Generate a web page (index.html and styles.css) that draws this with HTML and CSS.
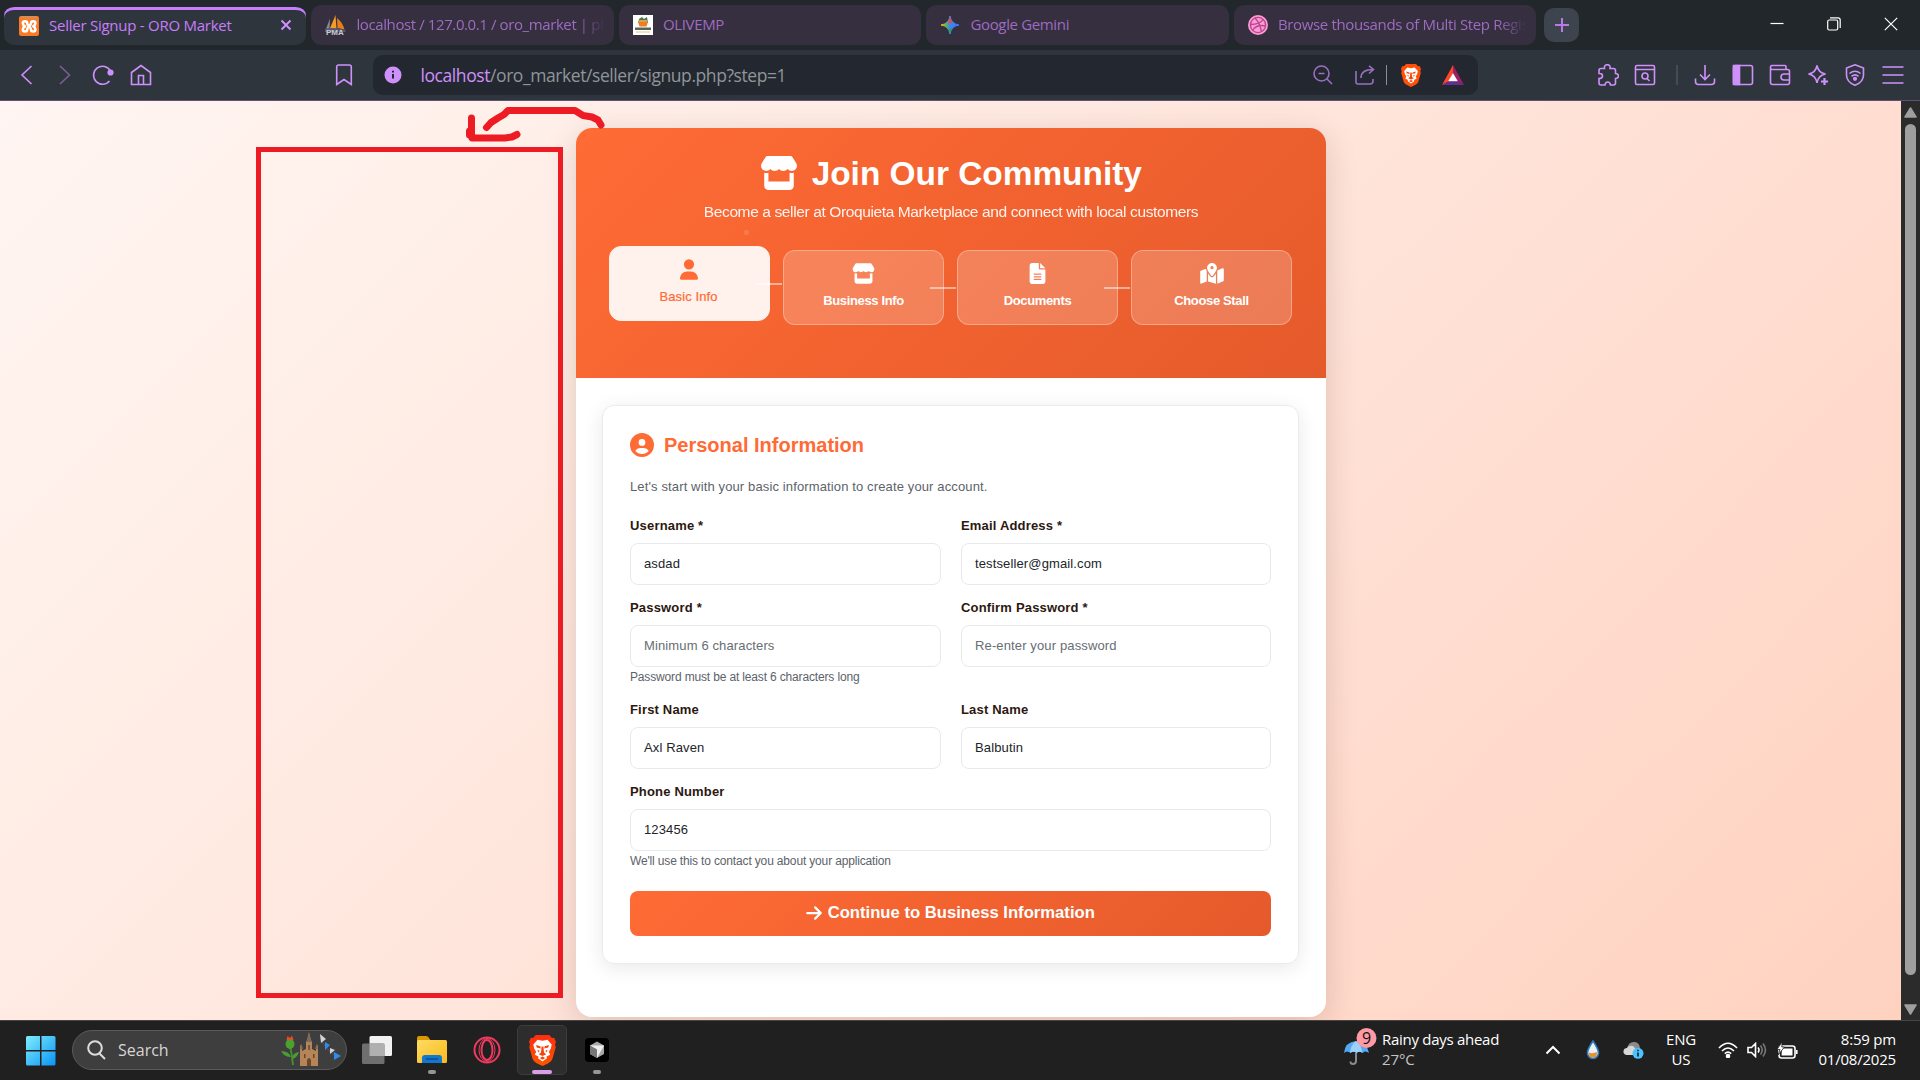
FILE: index.html
```html
<!DOCTYPE html>
<html lang="en">
<head>
<meta charset="utf-8">
<title>Seller Signup - ORO Market</title>
<link rel="stylesheet" href="styles.css">
</head>
<body>
<svg class="defs" width="0" height="0">
  <defs>
    <linearGradient id="winGrad" x1="0" y1="0" x2="1" y2="1"><stop offset="0" stop-color="#7eeefc"/><stop offset="1" stop-color="#0a93f5"/></linearGradient>
    <linearGradient id="folderGrad" x1="0" y1="0" x2="1" y2="1"><stop offset="0" stop-color="#ffdc62"/><stop offset="1" stop-color="#fbb91c"/></linearGradient>
    <linearGradient id="braveGrad" x1="0" y1="0" x2="0" y2="1"><stop offset="0" stop-color="#ff2d10"/><stop offset="1" stop-color="#ff5500"/></linearGradient>
    <linearGradient id="gemGrad" x1="0" y1="0.5" x2="1" y2="0.5"><stop offset="0" stop-color="#fbbc04"/><stop offset=".3" stop-color="#5fae6a"/><stop offset=".5" stop-color="#3b86f5"/><stop offset="1" stop-color="#2f7df6"/></linearGradient>
    <symbol id="store" viewBox="0 0 576 512"><path d="M547.6 103.8L490.3 13.1C485.2 5 476.1 0 466.4 0H109.6C99.9 0 90.8 5 85.7 13.1L28.3 103.8c-29.6 46.8-3.4 111.9 51.9 119.4c4 .5 8.1 .8 12.1 .8c26.1 0 49.3-11.4 65.2-29c15.9 17.6 39.1 29 65.2 29c26.1 0 49.3-11.4 65.2-29c15.9 17.6 39.1 29 65.2 29c26.2 0 49.3-11.4 65.2-29c16 17.6 39.1 29 65.2 29c4.1 0 8.1-.3 12.1-.8c55.5-7.4 81.8-72.5 52.1-119.4zM499.7 254.9l-.1 0c-5.3 .7-10.7 1.1-16.2 1.1c-12.4 0-24.3-1.9-35.4-5.3V384H128V250.6c-11.2 3.5-23.2 5.4-35.6 5.4c-5.5 0-11-.4-16.3-1.1l-.1 0c-4.1-.6-8.1-1.3-12-2.3V384v64c0 35.3 28.7 64 64 64H448c35.3 0 64-28.7 64-64V384 252.6c-4 1-8 1.8-12.3 2.3z"/></symbol>
    <symbol id="lion" viewBox="0 0 20 23"><path d="M5 0h10l2 2.2 1.6-.2 1.4 3-.7 2 .5 2-2.3 8.2c-.6 1.800-1.600 2.600-3.500 3.900L10 23l-4-1.900C4.100 19.800 3.100 19 2.500 17.200L.2 9l.5-2L0 5l1.400-3 1.600.2z"/><path fill="#fff" d="M6.300 3.600L10 4.200l3.700-.6L16.800 7l-.6 3-1.500 2.400 1 2.200-2.700 1.400.3 1.300L10 19.600l-3.300-2.300.3-1.300-2.700-1.400 1-2.200L3.800 10l-.6-3z"/><path fill="#f4460c" d="M5.300 7.500l3.100.9.300 1.700-3-.8zM14.700 7.500l-3.100.9-.3 1.700 3-.8zM9.300 8.500h1.400l.4 4.500 1.700 1.300L10 15.600l-2.800-1.300L8.900 13zM8 17l2-1 2 1-2 1.300zM6.200 11l1.700.6-.8 1.400zM13.800 11l-1.700.6.8 1.400z"/></symbol>
  </defs>
</svg>

<div class="screen">
  <header class="tabstrip">
    <div class="tab tab-active">
      <svg class="fav" width="20" height="20" viewBox="0 0 20 20"><rect width="20" height="20" rx="2" fill="#fb7a24"/><rect x="2" width="16" height="2.500" fill="#d98a55"/><g fill="none" stroke="#fff" stroke-width="2.600" stroke-linecap="round" stroke-linejoin="round"><path d="M3.800 7.200q0-2 2.200-2t2.200 2Q8.200 8.500 10 10.200 8.200 11.800 8.200 13.500q0 2-2.200 2t-2.200-2Q3.800 11.500 6 10.300 3.800 9.200 3.800 7.200z"/><path d="M12 7.200q0-2 2.200-2t2.200 2q0 2-2.200 3 2.200 1.200 2.200 3.300t-2.200 2-2.200-2Q12 11.800 10 10.200 12 8.500 12 7.200z"/></g></svg>
      <span class="tab-title t1">Seller Signup - ORO Market</span>
      <svg class="tab-x" width="12" height="12" viewBox="0 0 12 12"><path d="M1.500 1.500l9 9M10.500 1.500l-9 9"/></svg>
    </div>
    <div class="tab">
      <svg class="fav" width="21" height="20" viewBox="0 0 21 20"><path d="M1 14L5 3.500l-.5 10z" fill="#8d8b92"/><path d="M4.500 14.500L10.500 0l1 14z" fill="#f59a23"/><path d="M12 3q6 5 7.500 11.500L12.500 13z" fill="#e87f14"/><path d="M0 14q10-2.500 20.500 1v2H0z" fill="#55596f"/><text x="1" y="20" class="pma">PMA</text></svg>
      <span class="tab-title t2">localhost / 127.0.0.1 / oro_market | ph</span>
    </div>
    <div class="tab">
      <svg class="fav" width="20" height="20" viewBox="0 0 20 20"><rect width="20" height="20" fill="#fff"/><path d="M6 4l3-2 2 2 3-2 1 6H5z" fill="#4d7a44"/><path d="M5 7h10l-1.500 4.500h-7z" fill="#f07c26"/><path d="M6 5h8v2H6z" fill="#dca04a"/><path d="M2 12.500h16v2.500H2z" fill="#53685a"/><path d="M3 16.500h14v1H3z" fill="#eec27d"/></svg>
      <span class="tab-title t3">OLIVEMP</span>
    </div>
    <div class="tab">
      <svg class="fav" width="20" height="20" viewBox="0 0 20 20"><path d="M10 1Q11.200 8.800 19 10Q11.200 11.200 10 19Q8.800 11.200 1 10Q8.800 8.800 10 1z" fill="url(#gemGrad)" stroke="url(#gemGrad)"/><path d="M10 1q1 5 3 7l-5 0q1.500-3 2-7z" fill="#e8484a"/><path d="M8.500 13q1 3 1.500 6q.7-3 2-5.500z" fill="#29a35a"/></svg>
      <span class="tab-title t4">Google Gemini</span>
    </div>
    <div class="tab">
      <svg class="fav" width="20" height="20" viewBox="0 0 20 20"><circle cx="10" cy="10" r="10" fill="#ff9ad6"/><g fill="none" stroke="#b8488e" stroke-width="1.400"><circle cx="10" cy="10" r="7.600"/><path d="M7 3q5 5 6.500 14M2.500 9.500Q12 9.500 15 4.500M4.500 15.500Q8.500 9 17.500 11"/></g></svg>
      <span class="tab-title t5">Browse thousands of Multi Step Regis</span>
    </div>
    <button class="newtab"><svg width="14" height="14" viewBox="0 0 14 14"><path d="M7 0v14M0 7h14"/></svg></button>
    <div class="winctl">
      <svg width="14" height="14" viewBox="0 0 14 14"><path d="M.5 6.500h13"/></svg>
      <svg width="14" height="14" viewBox="0 0 14 14"><rect x=".7" y="3" width="10" height="10" rx="1.500"/><path d="M3 .8h8q2.200 0 2.200 2.200v8"/></svg>
      <svg width="14" height="14" viewBox="0 0 14 14"><path d="M.8.800l12.400 12.400M13.200.800L.8 13.200"/></svg>
    </div>
  </header>

  <nav class="toolbar">
    <div class="nav-left">
      <svg width="22" height="22" viewBox="0 0 22 22"><path d="M15.500 2L6 11l9.500 9"/></svg>
      <svg class="dim" width="22" height="22" viewBox="0 0 22 22"><path d="M6 2l9.500 9L6 20"/></svg>
      <svg width="22" height="22" viewBox="0 0 22 22"><path d="M17.500 17A9 9 0 1 1 18.500 7"/><circle cx="18.500" cy="8.500" r="2.300" class="solid"/></svg>
      <svg width="22" height="22" viewBox="0 0 22 22"><path d="M1.500 8.500L11 1.500l9.500 7v12h-19zM8.500 20.500v-9h5v9"/></svg>
    </div>
    <svg class="bookmark" width="18" height="22" viewBox="0 0 18 22"><path d="M1.700 3q0-2 2-2h10.600q2 0 2 2v17.500L9 15.500l-7.300 5z"/></svg>
    <div class="urlbar">
      <svg class="info" width="18" height="18" viewBox="0 0 18 18"><circle cx="9" cy="9" r="8.500"/><path d="M9 8v4.500M9 4.800v1.700"/></svg>
      <span class="url"><b>localhost</b>/oro_market/seller/signup.php?step=1</span>
      <div class="url-icons">
        <svg class="dim2" width="20" height="20" viewBox="0 0 20 20"><circle cx="8.500" cy="8.500" r="7.500"/><path d="M14 14l5 5M5.500 8.500h6"/></svg>
        <svg class="dim2" width="20" height="20" viewBox="0 0 20 20"><path d="M1 6v11q0 2 2 2h12q3 0 3-3v-2M6 13q0-8.500 12-8.500M14 .8l4.500 3.700L14 8.500"/></svg>
        <i class="bar"></i>
        <svg class="brave" width="20" height="23" fill="#ff4f08"><use href="#lion"/></svg>
        <svg class="bat" width="22" height="20" viewBox="0 0 22 20"><path fill="#ff4724" d="M11 0L0 20l6.500-3.500L11 8z"/><path fill="#9e1f63" d="M11 0l11 20-6.500-3.500L11 8z"/><path fill="#662d91" d="M0 20h22l-6.500-3.700h-9z"/><path fill="#fff" d="M11 8l4.800 8.300H6.200z"/></svg>
      </div>
    </div>
    <div class="nav-right">
      <svg width="22" height="22" viewBox="0 0 22 22"><path d="M2 6.500q0-2 2-2h3.500q-.5-3.800 2.800-3.800T13 4.500h3.500q2 0 2 2v3q3 .3 3 2.500t-3 2.500v4.500q0 2-2 2h-3q-.5-3-2.800-3T8 21H4q-2 0-2-2v-4.500q3.500 0 3.500-2.600T2 9.500z"/></svg>
      <svg width="22" height="22" viewBox="0 0 22 22"><rect x="1.500" y="1.500" width="19" height="19" rx="1.500"/><path d="M1.500 5.500h19M13 14.500l2.500 2.500"/><circle cx="11" cy="12" r="3"/></svg>
      <i class="bar faint"></i>
      <svg width="22" height="22" viewBox="0 0 22 22"><path d="M11 1v14M6 10.500l5 5 5-5M1.500 14.500v3q0 3 3 3h13q3 0 3-3v-3"/></svg>
      <svg width="22" height="22" viewBox="0 0 22 22"><rect x="1.500" y="1.500" width="19" height="19" rx="2"/><path class="solid" d="M1.500 1.500h6v19h-6z"/></svg>
      <svg width="22" height="22" viewBox="0 0 22 22"><path d="M17 5.500V2.500q0-1-1-1H3q-1.500 0-1.500 2T3 5.500h15.500q2 0 2 2v11q0 2-2 2h-15q-2 0-2-2v-15M20.500 10H15q-3 0-3 3t3 3h5.500"/></svg>
      <svg width="22" height="22" viewBox="0 0 22 22"><path d="M10 1.500q1.200 7.300 8.500 8.500-7.300 1.200-8.500 9-1.200-7.800-8.500-9Q8.800 8.800 10 1.500z"/><path d="M17.500 14v7M14 17.500h7" stroke-width="2.200"/></svg>
      <svg width="22" height="22" viewBox="0 0 22 22"><path d="M11 .8l8.500 3.200v7q0 7-8.500 10.300Q2.500 18 2.500 11V4zM5.500 9.500q5.500-4.500 11 0M7.500 12.300q3.500-2.800 7 0"/><circle cx="11" cy="14.800" r="1.300" class="solid"/></svg>
      <svg width="22" height="22" viewBox="0 0 22 22"><path d="M.5 3h21M.5 11h21M.5 19h21"/></svg>
    </div>
  </nav>

  <div class="viewport">
    <main class="page">
      <div class="signup">
        <div class="hero">
          <h1><svg width="38" height="34"><use href="#store"/></svg><span>Join Our Community</span></h1>
          <p class="tagline">Become a seller at Oroquieta Marketplace and connect with local customers</p>
          <div class="steps">
            <div class="step current"><svg width="18" height="21" viewBox="0 0 448 512"><path d="M224 256A128 128 0 1 0 224 0a128 128 0 1 0 0 256zm-45.700 48C79.800 304 0 383.800 0 482.300C0 498.700 13.300 512 29.700 512H418.300c16.400 0 29.700-13.300 29.700-29.700C448 383.800 368.200 304 269.700 304H178.300z"/></svg><span>Basic Info</span></div>
            <div class="step"><svg width="23" height="21"><use href="#store"/></svg><span>Business Info</span></div>
            <div class="step"><svg width="17" height="21" viewBox="0 0 384 512"><path d="M64 0C28.700 0 0 28.700 0 64V448c0 35.300 28.700 64 64 64H320c35.300 0 64-28.700 64-64V160H256c-17.700 0-32-14.300-32-32V0H64zM256 0V128H384L256 0zM112 256H272c8.800 0 16 7.200 16 16s-7.200 16-16 16H112c-8.800 0-16-7.200-16-16s7.200-16 16-16zm0 64H272c8.800 0 16 7.200 16 16s-7.200 16-16 16H112c-8.800 0-16-7.200-16-16s7.200-16 16-16zm0 64H272c8.800 0 16 7.200 16 16s-7.200 16-16 16H112c-8.800 0-16-7.200-16-16s7.200-16 16-16z"/></svg><span>Documents</span></div>
            <div class="step"><svg width="24" height="21" viewBox="0 0 576 512"><path d="M408 120c0 54.600-73.100 151.900-105.200 192c-7.700 9.600-22 9.600-29.600 0C241.100 271.900 168 174.600 168 120C168 53.700 221.700 0 288 0s120 53.700 120 120zm8 80.400c3.500-6.900 6.700-13.800 9.600-20.600c.5-1.200 1-2.500 1.500-3.700l116-46.400C558.900 123.400 576 135 576 152V422.800c0 9.800-6 18.600-15.100 22.300L416 503V200.400zM137.600 138.300c2.400 14.100 7.200 28.300 12.800 41.500c2.900 6.800 6.100 13.700 9.600 20.600V451.800L32.900 502.700C17.100 509 0 497.400 0 480.400V209.600c0-9.800 6-18.600 15.100-22.300l122.600-49zM327.800 332c13.900-17.400 35.700-45.700 56.200-77V504.300L192 449.400V255c20.500 31.300 42.300 59.600 56.200 77c20.500 25.600 59.100 25.600 79.600 0zM288 152a40 40 0 1 0 0-80 40 40 0 1 0 0 80z"/></svg><span>Choose Stall</span></div>
          </div>
        </div>
        <form class="card">
          <h2><svg width="24" height="24" viewBox="0 0 512 512"><path d="M399 384.200C376.900 345.800 335.400 320 288 320H224c-47.400 0-88.900 25.800-111 64.200c35.200 39.200 86.200 63.800 143 63.800s107.800-24.700 143-63.800zM0 256a256 256 0 1 1 512 0A256 256 0 1 1 0 256zm256 16a72 72 0 1 0 0-144 72 72 0 1 0 0 144z"/></svg><span>Personal Information</span></h2>
          <p class="intro">Let's start with your basic information to create your account.</p>
          <div class="fields">
            <div class="field"><label>Username *</label><div class="input">asdad</div></div>
            <div class="field"><label>Email Address *</label><div class="input">testseller@gmail.com</div></div>
            <div class="field hinted"><label>Password *</label><div class="input ph">Minimum 6 characters</div><small>Password must be at least 6 characters long</small></div>
            <div class="field hinted"><label>Confirm Password *</label><div class="input ph">Re-enter your password</div></div>
            <div class="field"><label>First Name</label><div class="input">Axl Raven</div></div>
            <div class="field"><label>Last Name</label><div class="input">Balbutin</div></div>
            <div class="field wide"><label>Phone Number</label><div class="input">123456</div><small>We'll use this to contact you about your application</small></div>
          </div>
          <button type="button" class="continue"><svg width="16" height="18" viewBox="0 0 448 512"><path d="M438.600 278.600c12.500-12.500 12.500-32.800 0-45.300l-160-160c-12.500-12.500-32.800-12.500-45.300 0s-12.500 32.800 0 45.300L338.800 224 32 224c-17.700 0-32 14.300-32 32s14.300 32 32 32l306.700 0L233.400 393.400c-12.500 12.500-12.500 32.800 0 45.300s32.800 12.500 45.300 0l160-160z"/></svg><span>Continue to Business Information</span></button>
        </form>
      </div>
      <div class="marker-box"></div>
      <svg class="marker-arrow" width="150" height="50" viewBox="460 100 150 50"><path d="M486.500 127.500L491 122.500L498 118L504 114.500L508 110.500H575L583 115.500L592 117L598 120L601 125"/><path d="M471.500 118V133L472 138H505L512 137L517 134.500"/><path d="M469.500 131v4"/></svg>
    </main>
    <div class="scroll">
      <svg width="13" height="11" viewBox="0 0 13 11"><path d="M6.500 1L12 10H1z" stroke-width="1.500"/></svg>
      <i></i>
      <svg width="13" height="11" viewBox="0 0 13 11"><path d="M6.500 10L12 1H1z" stroke-width="1.500"/></svg>
    </div>
  </div>

  <footer class="taskbar">
    <svg class="start" width="30" height="30" viewBox="0 0 30 30"><path fill="url(#winGrad)" d="M1.500 0H14v14H0V1.500Q0 0 1.500 0zM15.500 0h12.500q1.500 0 1.500 1.500V14h-14zM0 15.500h14v14H1.500q-1.500 0-1.500-1.500zM15.500 15.500h14V28q0 1.500-1.500 1.500H15.500z"/></svg>
    <div class="search">
      <svg width="19" height="20" viewBox="0 0 19 20"><circle cx="8" cy="8" r="6.800"/><path d="M12.500 13.500l5.500 5.500"/></svg>
      <span>Search</span>
      <svg class="art" width="62" height="34" viewBox="0 0 62 34"><path d="M10 12q2 10 3 20" stroke="#3f8f2a" stroke-width="2" fill="none"/><path d="M11 24Q4 24 1 18q8 0 10 6zM12 26q5-1 7-7-7 1-7 7z" fill="#4c9a34"/><ellipse cx="10" cy="11" rx="4.500" ry="5" fill="#4da02f"/><path d="M6.500 7l1-4 2.500 2L12 2.500 13.500 7z" fill="#e0502a"/><path d="M20 33V14l1-3 1 3v4l4-2V9l1-2 1-4 1-4 1 4 1 4 1 2v7l4 2v-4l1-3 1 3v19z" fill="#b58459"/><path d="M27 33v-6q2-4 4 0v6zM24 21h1.500v4H24zM33 21h1.500v4H33zM28.300 12h1.500v5h-1.500z" fill="#6a462b"/><path d="M20 16l1.500-5L23 16zM35 16l1.500-5L38 16zM26.500 9L29 0l2.500 9z" fill="#7c6a5c"/><path d="M40 2q4 17 20 22" stroke="#555" fill="none"/><path d="M40 1l6 5-5 4zM50 15l5 2-5 4z" fill="#cfd3da"/><path d="M45 9l5 3-5 5zM54 19l7 4-7 4z" fill="#2f8bf0"/></svg>
    </div>
    <div class="apps">
      <div class="app"><svg width="30" height="28" viewBox="0 0 30 28"><rect x="7.500" width="22.500" height="20" rx="1.500" fill="#f1f1f1"/><rect y="7.500" width="22.500" height="20.500" rx="1.500" fill="#6f6f6f"/><path d="M7.500 7.500h15v12.500h-15z" fill="#b0b0b0"/></svg></div>
      <div class="app run"><svg width="30" height="28" viewBox="0 0 30 28"><path d="M0 2q0-2 2-2h7q2 0 3 2l2 3H0z" fill="#d99a00"/><rect y="4" width="30" height="23" rx="1.500" fill="url(#folderGrad)"/><path d="M5 27v-5q0-3 3-3h14q3 0 3 3v5z" fill="#1177cf"/><path d="M9 23h12" stroke="#0b4c8c" stroke-width="1.500"/></svg></div>
      <div class="app"><svg width="28" height="28" viewBox="0 0 28 28"><g fill="none" stroke="#ee3a5f" stroke-width="2"><ellipse cx="14" cy="14" rx="12.500" ry="12.500"/><ellipse cx="14" cy="14" rx="5.500" ry="10"/><ellipse cx="14" cy="14" rx="8" ry="11.500" stroke-width="1"/></g></svg></div>
      <div class="app run focus"><svg width="27" height="31" fill="url(#braveGrad)"><use href="#lion"/></svg></div>
      <div class="app run"><svg width="24" height="24" viewBox="0 0 24 24"><rect width="24" height="24" rx="4" fill="#000"/><path d="M12 3.500l7 4v8.500l-7 4-7-4V7.500z" fill="#a8a8a8"/><path d="M5 7.500h14L12 20v-8.500z" fill="#eee"/><path d="M5 7.500l7 4V20l-7-4z" fill="#777"/></svg></div>
    </div>
    <div class="weather">
      <svg width="36" height="40" viewBox="0 0 36 40"><path d="M1 25Q2 14 13 13q11 1 13 12-4-3-6.500 0-3-2.500-6 0-3-2.500-6 0Q4 22 1 25z" fill="#55a9f2"/><path d="M7 25q1-9 6-12 5 3 6.500 12-3-2.500-6 0-3-2.500-6.500 0z" fill="#9dd0fa"/><path d="M13 25v8.500q-.5 2.500-3 2.500t-2.500-2.500" fill="none" stroke="#8a8a8a" stroke-width="2"/><circle cx="23.500" cy="10" r="10" fill="#ff99a4"/><text x="23.500" y="15.500" text-anchor="middle" class="num">9</text></svg>
      <div><span class="w1">Rainy days ahead</span><span class="w2">27°C</span></div>
    </div>
    <div class="tray">
      <svg class="chev" width="16" height="10" viewBox="0 0 16 10"><path d="M1.500 8.500L8 2l6.500 6.500"/></svg>
      <svg class="drop" width="14" height="20" viewBox="0 0 14 20"><path d="M7 1q5.500 8 5.500 12a5.500 5.500 0 0 1-11 0Q1.500 9 7 1z" fill="#e9f1fb" stroke="#2d78bd"/><path d="M3 12.500q4 1.500 8-.5.500 5.500-4 5.500t-4-5z" fill="#e99326"/></svg>
      <svg class="cloud" width="21" height="18" viewBox="0 0 21 18"><path d="M4 7Q6 0 12 1q5 1 5 7v6H7z" fill="#8b8b8b"/><path d="M3.500 14Q0 13 .5 10 1 7 4 7q2-3 6-2 3 1.500 3 9z" fill="#d7d7d7"/><circle cx="15" cy="12.300" r="5.500" fill="#4cc2ff"/><path d="M15 11.500v4M15 8.800v1.400" stroke="#123" stroke-width="1.600"/></svg>
      <div class="lang"><span>ENG</span><span>US</span></div>
      <svg class="wifi" width="20" height="16" viewBox="0 0 20 16"><path d="M1 6q9-9.500 18 0M4 9q6-6 12 0M6.800 11.700q3.200-3 6.400 0"/><circle cx="10" cy="14" r="1.500" fill="#fff"/></svg>
      <svg class="vol" width="21" height="16" viewBox="0 0 21 16"><path d="M1 5.500v5h3.500L8.500 14.500V1.500L4.500 5.500zM11 5.500q2 2.500 0 5"/><path d="M13.500 3.500q3.500 4.500 0 9M16 1.500q5 6.500 0 13" stroke="#777"/></svg>
      <svg class="batt" width="21" height="17" viewBox="0 0 21 17"><rect x="2" y="4" width="16" height="12" rx="2.500"/><path d="M19.800 8v4"/><path d="M5 6.500h10.500v7H4.500z" fill="#fff" stroke="none"/><path d="M5 0L0 7.500h3L1 13l6.500-8H4.800z" fill="#fff" stroke="#202020" stroke-width=".8"/></svg>
      <div class="clock"><span class="k1">8:59 pm</span><span class="k2">01/08/2025</span></div>
    </div>
  </footer>
</div>
</body>
</html>
```
FILE: styles.css
```css
* { box-sizing: border-box; }
html, body { margin: 0; height: 100%; overflow: hidden; }
body { font-family: "Liberation Sans", Arial, sans-serif; background: #202020; }
.defs { position: absolute; }
svg { display: block; flex: none; }
.screen { width: 1920px; height: 1080px; display: flex; flex-direction: column; }

/* Browser tabs */
.tabstrip { height: 50px; flex: none; background: #21272b; display: flex; align-items: flex-start; padding: 5px 22px 0 4px; gap: 5.200px; font-family: "Open Sans", "Noto Sans", sans-serif; }
.tab { width: 302.300px; height: 40px; border-radius: 10px; background: #362f40; display: flex; align-items: center; padding: 0 9px 0 14px; overflow: hidden; }
.tab-active { background: #2f353d; border-top: 2px solid #21272b; box-shadow: inset 0 3px 0 #c77dfc; padding-left: 15px; }
.tab-title { margin: -2px 0 0 10px; flex: 1; min-width: 0; font-size: 15px; line-height: 22px; color: #9d6cc0; white-space: nowrap; letter-spacing: -.35px; }
.tab-active .tab-title { color: #c77dfc; margin-top: -3px; letter-spacing: -.25px; }
.t2 { letter-spacing: -.4px; }
.t2, .t5 { -webkit-mask-image: linear-gradient(90deg, #000 88%, transparent); mask-image: linear-gradient(90deg, #000 88%, transparent); }
.tab-x { margin: -2px 5px 0 0; fill: none; stroke: #cf8fff; stroke-width: 2; }
.pma { font: bold 8px "Liberation Sans", sans-serif; fill: #c9c9d4; }
.newtab { width: 35px; height: 34px; margin: 3px 0 0 3px; padding: 0; border: 0; border-radius: 10px; background: #3d444e; display: grid; place-items: center; }
.newtab svg { stroke: #ba7ae6; stroke-width: 2; }
.winctl { margin: 12px 0 0 auto; display: flex; gap: 43px; }
.winctl svg { fill: none; stroke: #fff; stroke-width: 1.2; }

/* Navigation toolbar */
.toolbar { height: 51px; flex: none; background: #2f353d; border-bottom: 1px solid #604f79; display: flex; align-items: center; padding: 0 16.500px 0 16px; }
.toolbar svg { fill: none; stroke: #ce91fb; stroke-width: 1.6; }
.toolbar .solid { fill: #ce91fb; }
.nav-left { display: flex; width: 319px; gap: 16px; }
.nav-left .dim { stroke: #7c5d94; }
.urlbar { width: 1105px; height: 40px; margin-left: 20px; border-radius: 10px; background: #23272f; display: flex; align-items: center; padding: 0 14px 0 11px; }
.urlbar .info circle { fill: #ce91fb; stroke: none; }
.urlbar .info path { stroke: #23272f; stroke-width: 2; }
.url { margin: -1px 0 0 18.500px; font: 17.500px/24px "Open Sans", "Noto Sans", sans-serif; letter-spacing: -.42px; color: #8f969b; }
.url b { font-weight: 400; color: #ce91fb; }
.url-icons { margin-left: auto; display: flex; align-items: center; }
.toolbar .dim2 { stroke: #9a6fc0; margin-right: 22px; }
.bar { width: 1px; height: 20px; background: #8c9094; margin-right: 14px; margin-left: -11px; }
.toolbar .brave { fill: #ff4f08; stroke: none; margin-right: 21px; }
.toolbar .brave use, .toolbar .bat { stroke: none; }
.nav-right { margin-left: auto; display: flex; align-items: center; gap: 15.500px; }
.bar.faint { background: #454c56; width: 2px; margin: 0 1px 0 4px; }

/* Web page */
.viewport { flex: 1; min-height: 0; display: flex; }
.page { position: relative; flex: 1; overflow: hidden; padding: 27px 0 0 576px; background: linear-gradient(135deg, #fff5f2 0%, #ffede5 28%, #ffe4da 50%, #ffd2c0 100%); }
.signup { width: 750px; height: 889px; border-radius: 16px; background: #fff; box-shadow: 0 8px 32px rgba(60, 20, 10, .16); }
.hero { height: 250px; padding: 26px 33px 0; border-radius: 16px 16px 0 0; background: radial-gradient(circle at 170.500px 104.500px, rgba(255,255,255,.12) 2.500px, transparent 3px), linear-gradient(135deg, #ff6b35, #e55a2b); background-size: 100% 100%; color: #fff; text-align: center; }
h1 { margin: 0; height: 40px; display: flex; justify-content: center; align-items: center; gap: 13.500px; font-size: 33.400px; line-height: 40px; }
h1 svg, .step svg { fill: currentColor; }
h1 svg { margin-top: -2px; }
.tagline { margin: 8px 0 0; font-size: 15.500px; line-height: 20px; letter-spacing: -.38px; opacity: .92; }
.steps { display: grid; grid-template-columns: repeat(4, 161px); gap: 13px; margin-top: 28px; }
.step { position: relative; height: 75px; border: 1px solid rgba(255,255,255,.32); border-radius: 12px; background: rgba(255,255,255,.2); display: flex; flex-direction: column; align-items: center; padding-top: 12px; font-size: 13px; font-weight: 700; }
.step span { margin-top: 9px; line-height: 16px; letter-spacing: -.35px; }
.step:not(:last-child)::after { content: ""; position: absolute; left: 146px; top: 36px; width: 26px; height: 2px; background: rgba(255,255,255,.5); }
.step.current { margin: -4px 0 4px; padding-right: 2px; background: #fff1eb; border-color: #fff1eb; color: #ff6b35; font-weight: 400; }
.step.current span { letter-spacing: .1px; -webkit-text-stroke: .2px #ff6b35; }

.card { width: 697px; height: 559px; margin: 27px 0 0 26px; padding: 27px; border: 1px solid #e9ecef; border-radius: 12px; background: #fff; box-shadow: 0 4px 20px rgba(0, 0, 0, .09); }
h2 { margin: 0; display: flex; align-items: center; gap: 10px; height: 24px; font-size: 20px; line-height: 24px; color: #ff6b35; }
h2 svg { fill: #ff6b35; }
.intro { margin: 21px 0 0; font-size: 13px; line-height: 18px; letter-spacing: .13px; color: #5c636a; }
.fields { margin-top: 22px; display: grid; grid-template-columns: 311px 310px; column-gap: 20px; }
.field { height: 82px; font-size: 13px; letter-spacing: .13px; }
.field.hinted { height: 102px; }
.field.wide { grid-column: 1 / 3; height: 95px; }
.field label { display: block; height: 16px; margin-bottom: 9px; line-height: 16px; font-weight: 700; letter-spacing: .18px; color: #2c1810; }
.input { height: 42px; border: 1px solid #e7eaed; border-radius: 8px; padding: 0 13px; line-height: 40px; color: #212529; background: #fff; }
.input.ph { color: #666d74; }
.field small { display: block; font-size: 12px; line-height: 14px; margin-top: 3px; letter-spacing: -.155px; color: #5c636a; }
.continue { width: 641px; height: 45px; margin-top: 12px; border: 0; border-radius: 8px; background: linear-gradient(135deg, #ff6b35, #e55a2b); color: #fff; font: 700 16.650px/20px "Liberation Sans", Arial, sans-serif; display: flex; align-items: center; justify-content: center; gap: 5.500px; padding: 0 0 1px; }
.continue svg { fill: #fff; }

/* Hand-drawn markup over the page */
.marker-box { position: absolute; left: 256px; top: 46px; width: 307px; height: 851px; border: 5px solid #ed1c24; }
.marker-arrow { position: absolute; left: 460px; top: -1px; fill: none; stroke: #ed1c24; stroke-width: 7; stroke-linecap: round; stroke-linejoin: round; }

.scroll { width: 19px; background: #2b2b2b; display: flex; flex-direction: column; align-items: center; padding: 6px 0 5px; }
.scroll svg { fill: #9f9f9f; stroke: #9f9f9f; stroke-linejoin: round; }
.scroll i { width: 11px; height: 851px; margin: 6px 0 auto; border-radius: 6px; background: #9f9f9f; }

/* Taskbar */
.taskbar { height: 60px; flex: none; background: #202020; border-top: 1px solid #464646; display: flex; align-items: center; padding: 0 24px 0 26px; color: #fff; font: 15px/20px "Open Sans", "Noto Sans", sans-serif; }
.search { width: 275px; height: 40px; margin: -1px 0 0 16px; border-radius: 20px; border: 1px solid #5a5a5a; background: #3e3e3e; display: flex; align-items: center; padding: 0 4px 0 14px; font-size: 16px; color: #d6d6d6; }
.search > svg:first-child { fill: none; stroke: #ddd; stroke-width: 2; }
.search span { margin-left: 12px; }
.search .art { margin-left: auto; overflow: visible; }
.apps { display: flex; margin: -1px 0 0 5px; }
.app { position: relative; width: 50px; height: 50px; margin-right: 5px; display: grid; place-items: center; }
.run::after { content: ""; position: absolute; left: 21px; bottom: 1px; width: 8px; height: 4px; border-radius: 2px; background: #959595; }
.focus { border: 1px solid #3c3c3c; border-radius: 5px; background: #2d2d2d; }
.focus::after { left: 14px; bottom: 0; width: 20px; background: #d99ee6; }
.weather { display: flex; align-items: center; margin-left: 716px; }
.weather > svg { margin-top: -6px; }
.weather div, .lang, .clock { display: flex; flex-direction: column; white-space: nowrap; margin-top: -3px; }
.weather div { margin: -4px 0 0 3px; }
.w1 { letter-spacing: -.28px; }
.w2 { color: #c4c4c4; letter-spacing: -.1px; }
.num { font: 16px "Open Sans", sans-serif; fill: #111; }
.tray { margin-left: auto; display: flex; align-items: center; }
.tray > svg { fill: none; stroke: #fff; stroke-width: 1.6; margin-top: -1px; }
.tray .chev { margin-top: -2px; stroke-width: 2; }
.tray .drop, .tray .cloud { stroke: none; }
.drop { margin-left: 24.500px; }
.cloud { margin-left: 23.500px; }
.lang { margin-left: 21px; align-items: center; width: 32px; letter-spacing: -.2px; }
.wifi { margin-left: 21px; }
.vol { margin-left: 9px; }
.batt { margin-left: 9px; }
.clock { align-items: flex-end; width: 98px; margin-top: -4px; letter-spacing: -.2px; }
```
